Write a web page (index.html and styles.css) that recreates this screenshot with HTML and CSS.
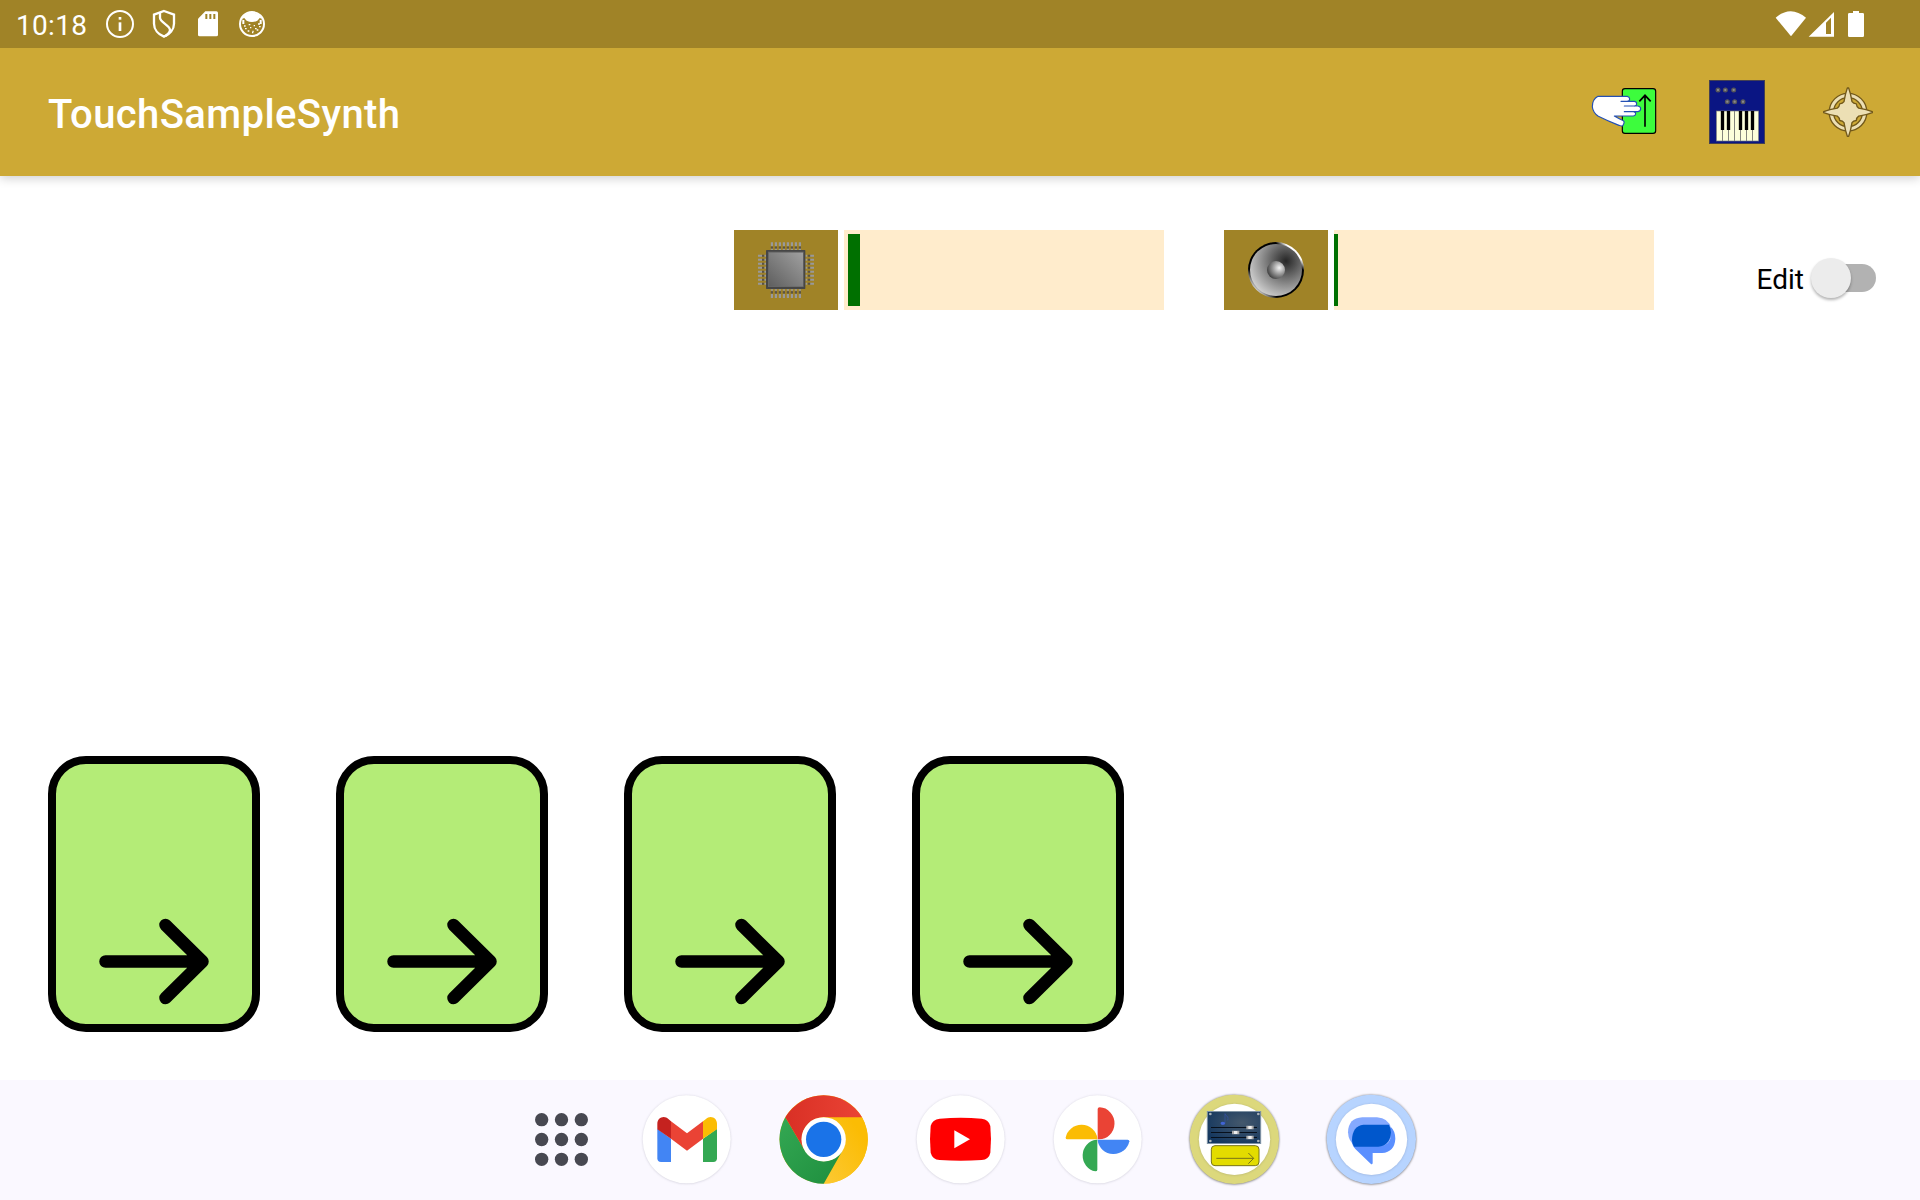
FILE: index.html
```html
<!DOCTYPE html>
<html lang="en">
<head>
<meta charset="utf-8">
<title>TouchSampleSynth</title>
<link rel="stylesheet" href="styles.css">
</head>
<body>
<div class="screen">
  <div class="status-bar">
    <span class="clock">10:18</span>
    <svg class="status-notes" viewBox="312 24 492 96" fill="none" stroke="#fff">
      <circle cx="360" cy="72" r="39" stroke-width="6"/>
      <path d="M360 67v26" stroke-width="8"/><path d="M360 51v8" stroke-width="8"/>
      <path d="M492 33l30 11v27c0 17-13 32-30 39c-17-7-30-22-30-39V44z" stroke-width="7"/>
      <path d="M480 38v15c0 14 30 23 30 37c0 7-7 13-13 18" stroke-width="7"/>
      <path d="M616 34h33q5 0 5 5v65q0 5-5 5h-50q-5 0-5-5V56z" fill="#fff" stroke="none"/>
      <path d="M619 42v15M631 42v15M643 42v15" stroke="#a08327" stroke-width="6"/>
      <circle cx="756" cy="72" r="36" stroke-width="6"/>
      <path d="M726 60Q728 40 756 37Q784 40 786 60L780 53L772 62Q756 70 740 62L732 53z" fill="#fff" stroke="none"/>
      <path d="M730 60v12M782 60v12" stroke-width="6"/>
      <path d="M732 78h5m9-4h5m10 3h4m9-5h6m-45 14h5m10-3h4m11 3h5m7-6h5m-39 13h5m9 1h4m9-4h5m-19 8h4" stroke-width="4"/>
    </svg>
    <svg class="status-system" viewBox="102 24 282 96" fill="#fff">
      <path d="M107 53Q152 14 198 53L153 109z"/>
      <path fill-rule="evenodd" d="M206 110L282 36v74zM258 68v34h15V53z"/>
      <path d="M339 33h18v6h11q4 0 4 4v64q0 4-4 4h-40q-4 0-4-4V43q0-4 4-4h11z"/>
    </svg>
  </div>

  <header class="app-bar">
    <h1 class="app-title">TouchSampleSynth</h1>
    <svg class="action action-touch" viewBox="60 60 210 192" stroke-linejoin="round" stroke-linecap="round">
      <rect x="157" y="86" width="100" height="134" rx="8" fill="#3dfc3d" stroke="#000" stroke-width="3.5"/>
      <path d="M225 200v-94M208 124l17-18l17 18" fill="none" stroke="#000" stroke-width="5" stroke-linecap="butt" stroke-linejoin="miter"/>
      <path d="M84 109h88q7 2 7 8q0 6-6 7h20q7 1 7 7q0 6-6 7h10q8 2 8 8q0 7-8 9h-12q6 2 5 7q-1 5-7 6h-57q15 9 27 14q5 3-1 14q-4 4-12 0q-32-12-62-27Q68 156 67 140Q67 118 84 109z" fill="#fff" stroke="#2450b5" stroke-width="3.5"/>
      <path d="M153 124h22M163 138h30M163 155h31" fill="none" stroke="#2450b5" stroke-width="3.5"/>
    </svg>
    <svg class="action action-synth" viewBox="414 60 174 192">
      <rect x="418.500" y="61.500" width="165" height="189" fill="#0a1583" stroke="#444052" stroke-width="3"/>
      <g fill="#8a8a8c" stroke="#55555a" stroke-width="4">
        <circle cx="444" cy="90" r="5.500"/><circle cx="466" cy="90" r="5.500"/><circle cx="491" cy="90" r="5.500"/>
        <circle cx="472" cy="125" r="5.500"/><circle cx="494" cy="125" r="5.500"/><circle cx="519" cy="125" r="5.500"/>
      </g>
      <rect x="439" y="153" width="127" height="90" fill="#fdffdb" stroke="#77787b" stroke-width="2"/>
      <path d="M457.500 153v90M475.500 153v90M493.500 153v90M511.500 153v90M529.500 153v90M547.500 153v90" stroke="#85867d" stroke-width="3"/>
      <path d="M457.500 153v57M475.500 153v57M511.500 153v57M529.500 153v57M547.500 153v57" stroke="#000" stroke-width="10"/>
    </svg>
    <svg class="action action-compass" viewBox="750 60 168 192" stroke-linejoin="round">
      <circle cx="834" cy="156.500" r="50" fill="none" stroke="#72591a" stroke-width="17"/>
      <circle cx="834" cy="156.500" r="50" fill="none" stroke="#ecdfb4" stroke-width="9"/>
      <path d="M832 84h4Q842 100 846 125Q850 131 859 131.500Q859.500 140 866 144.500Q890 148 907 155v3Q890 165 866 168.500Q859.500 173 859 181.500Q850 182 846 188Q842 213 836 229h-4Q826 213 822 188Q818 182 809 181.500Q808.500 173 802 168.500Q778 165 761 158v-3Q778 148 802 144.500Q808.500 140 809 131.500Q818 131 822 125Q826 100 832 84z" fill="#ecdfb4" stroke="#72591a" stroke-width="4"/>
    </svg>
  </header>

  <main class="content">
    <section class="toolbar">
      <div class="meter">
        <div class="meter-label">
          <svg class="meter-icon" viewBox="108 75 180 180">
            <defs><linearGradient id="die" x1="0" y1="1" x2="1" y2="0"><stop offset="0" stop-color="#5f5f5f"/><stop offset="1" stop-color="#a0a0a0"/></linearGradient></defs>
            <g fill="none" stroke="#999" stroke-dasharray="6.500 5.500">
              <path d="M152.500 87.500h92M152.500 243h92M120 119v92M276 119v92" stroke-width="12"/>
              <path d="M152.500 98h92M152.500 232h92M129.500 119v92M267 119v92" stroke="#57524a" stroke-width="7"/>
              <path d="M152.500 104h92M152.500 225h92M136 119v92M259 119v92" stroke-width="5"/>
            </g>
            <rect x="138" y="105" width="118" height="117" rx="2" fill="#464646"/>
            <rect x="144" y="110" width="107" height="106" fill="#686868"/>
            <rect x="147" y="113" width="102" height="101" fill="url(#die)"/>
          </svg>
        </div>
        <div class="meter-track"><div class="meter-fill cpu-fill"></div></div>
      </div>
      <div class="meter">
        <div class="meter-label">
          <svg class="meter-icon" viewBox="108 75 180 180">
            <defs>
              <linearGradient id="rim" x1="0" y1="1" x2="1" y2="0"><stop offset="0.120" stop-color="#fff"/><stop offset="0.270" stop-color="#000"/><stop offset="0.740" stop-color="#000"/><stop offset="0.820" stop-color="#fff"/></linearGradient>
              <radialGradient id="cone" gradientUnits="userSpaceOnUse" cx="228" cy="138" r="118"><stop offset="0" stop-color="#262626"/><stop offset="0.500" stop-color="#7b7b7b"/><stop offset="1" stop-color="#cfcfcf"/></radialGradient>
              <radialGradient id="cap" cx="0.680" cy="0.380" r="0.720"><stop offset="0" stop-color="#f5f5f5"/><stop offset="0.500" stop-color="#969696"/><stop offset="1" stop-color="#3c3c3c"/></radialGradient>
            </defs>
            <circle cx="198" cy="165" r="84" fill="url(#rim)"/>
            <circle cx="198" cy="165" r="78" fill="url(#cone)"/>
            <circle cx="198" cy="165" r="27" fill="url(#cap)"/>
          </svg>
        </div>
        <div class="meter-track"><div class="meter-fill volume-fill"></div></div>
      </div>
      <label class="edit-toggle"><span class="edit-label">Edit</span><span class="switch"><span class="switch-thumb"></span></span></label>
    </section>

    <section class="pads">
      <div class="pad"><svg class="pad-arrow" viewBox="0 0 116 88"><path d="M10.500 44.500h97M70.500 8l37 36.500l-37 36.500"/></svg></div>
      <div class="pad"><svg class="pad-arrow" viewBox="0 0 116 88"><path d="M10.500 44.500h97M70.500 8l37 36.500l-37 36.500"/></svg></div>
      <div class="pad"><svg class="pad-arrow" viewBox="0 0 116 88"><path d="M10.500 44.500h97M70.500 8l37 36.500l-37 36.500"/></svg></div>
      <div class="pad"><svg class="pad-arrow" viewBox="0 0 116 88"><path d="M10.500 44.500h97M70.500 8l37 36.500l-37 36.500"/></svg></div>
    </section>
  </main>

  <nav class="dock">
    <svg class="dock-grid" viewBox="42 66 168 288" fill="#474851">
      <circle cx="65" cy="149" r="20"/><circle cx="124.500" cy="149" r="20"/><circle cx="184" cy="149" r="20"/>
      <circle cx="65" cy="208.500" r="20"/><circle cx="124.500" cy="208.500" r="20"/><circle cx="184" cy="208.500" r="20"/>
      <circle cx="65" cy="268" r="20"/><circle cx="124.500" cy="268" r="20"/><circle cx="184" cy="268" r="20"/>
    </svg>
    <svg class="dock-app" viewBox="357 66 288 288">
      <circle class="disc" cx="500" cy="208" r="132"/>
      <path d="M412 176l41 30v70h-30q-11 0-11-11z" fill="#4285f4"/>
      <path d="M591 176l-42 30v70h31q11 0 11-11z" fill="#34a853"/>
      <path d="M453 154l48 36l48-36v52l-48 36l-48-36z" fill="#ea4335"/>
      <path d="M412 178v-17c0-17 20-27 34-13l7 6v52z" fill="#c5221f"/>
      <path d="M591 178v-17c0-17-20-27-34-13l-8 6v52z" fill="#fbbc04"/>
    </svg>
    <svg class="dock-app" viewBox="768 66 288 288">
      <defs>
        <linearGradient id="cr" x1="0" x2="1"><stop stop-color="#d93025"/><stop offset="1" stop-color="#ea4335"/></linearGradient>
        <linearGradient id="cg" x1="0" y1="0" x2="1" y2="1"><stop stop-color="#34a853"/><stop offset="1" stop-color="#1e8e3e"/></linearGradient>
        <linearGradient id="cy" x1="0" y1="1" x2="1" y2="0"><stop stop-color="#fcc934"/><stop offset="0.800" stop-color="#fbbc04"/></linearGradient>
      </defs>
      <circle cx="911" cy="208" r="132.500" fill="#fbbc04"/>
      <path d="M911 142h115A133 133 0 0 1 911 341L968 241A66 66 0 0 0 911 142z" fill="url(#cy)"/>
      <path d="M796 142L854 241A66 66 0 0 0 968 241L911 341A133 133 0 0 1 796 142z" fill="url(#cg)"/>
      <path d="M796 142A133 133 0 0 1 1026 142H911A66 66 0 0 0 854 241z" fill="url(#cr)"/>
      <circle cx="911" cy="208" r="66.500" fill="#fff"/><circle cx="911" cy="208" r="53" fill="#1a73e8"/>
    </svg>
    <svg class="dock-app" viewBox="39 66 288 288">
      <circle class="disc" cx="182" cy="208" r="132"/>
      <path d="M119 146Q182 141 245 146Q266 148 271 168Q275 208 271 248Q267 268 245 270Q182 275 119 270Q97 268 92 248Q88 208 92 168Q97 148 119 146z" fill="#f00"/>
      <path d="M163 181l47 27l-47 27z" fill="#fff"/>
    </svg>
    <svg class="dock-app" viewBox="450 66 288 288">
      <circle class="disc" cx="593" cy="208" r="132"/>
      <path d="M593 208v-91q0-5 6-5a46 48 0 0 1-3 96z" fill="#ea4335"/>
      <path d="M593 209h90q5 0 5 5a48 46 0 0 1-95-3z" fill="#4285f4"/>
      <path d="M592 209v90q0 5-6 5a46 48 0 0 1 3-95z" fill="#34a853"/>
      <path d="M592 208h-90q-5 0-5-5a48 46 0 0 1 95 2z" fill="#fbbc04"/>
    </svg>
    <svg class="dock-app" viewBox="51 66 288 288">
      <defs><radialGradient id="panel" cx="0.650" cy="0.350" r="0.750"><stop stop-color="#44586c"/><stop offset="1" stop-color="#14375f"/></radialGradient></defs>
      <circle class="ring" cx="193" cy="208" r="134" fill="#dcd87c"/>
      <circle class="disc" cx="193.500" cy="208" r="107"/>
      <rect x="112" y="124.500" width="160" height="96" fill="url(#panel)" stroke="#7f93a4" stroke-width="3"/>
      <g fill="#a9b2b8"><circle cx="121" cy="132" r="4"/><circle cx="265" cy="132" r="4"/><circle cx="121" cy="213" r="4"/><circle cx="265" cy="213" r="4"/></g>
      <path d="M123 172.500h138M123 187.500h138M123 202.500h138" stroke="#07101c" stroke-width="3"/>
      <path d="M229 172.500h22M186 187.500h22M229 202.500h22" stroke="#aaa" stroke-width="10"/>
      <path d="M235 172.500h10M192 187.500h10M235 202.500h10" stroke="#eee" stroke-width="9"/>
      <path d="M165 160v-29q2 7 8 9q2 6 0 11" fill="none" stroke="#3552a8" stroke-width="2"/><ellipse cx="158.500" cy="160" rx="7" ry="5" fill="#4164d4"/>
      <rect x="124" y="227" width="143" height="60" rx="11" fill="#e3dc00" stroke="#77741a" stroke-width="3"/>
      <path d="M139 265h112M235 249l16 16l-16 16" fill="none" stroke="#77741a" stroke-width="3"/>
    </svg>
    <svg class="dock-app" viewBox="462 66 288 288">
      <circle class="ring" cx="604" cy="208" r="134" fill="#b7d4ff"/>
      <circle class="disc" cx="604.500" cy="208" r="107"/>
      <path d="M577 142h44q34 2 42 32v28q-8 26-36 28h-70q-22-16-23-43q1-43 43-45z" fill="#85a9ff"/>
      <path d="M662 170q14 13 14 36q-2 40-40 43h-28v30q-1 6-6 2l-46-44q-11-12-11-27l27 18h60q28-4 31-30z" fill="#5a8fff"/>
      <path d="M580 164h77q6 12 6 24q-3 38-38 42h-73q-6-10-6-20q1-42 34-46z" fill="#0057cc"/>
    </svg>
  </nav>
</div>
</body>
</html>
```
FILE: styles.css
```css
* { box-sizing: border-box; }
body { margin: 0; font-family: Roboto, "Liberation Sans", sans-serif; background: #fff; }
svg { display: block; flex: none; }

.screen { width: 1920px; height: 1200px; display: flex; flex-direction: column; overflow: hidden; }

.status-bar { height: 48px; flex: none; display: flex; align-items: center; padding: 0 52px 0 16px; background: #a08327; color: #fff; }
.clock { width: 88px; font-size: 28px; line-height: 32px; letter-spacing: 0.3px; padding-top: 3px; }
.status-notes { width: 164px; height: 32px; }
.status-system { width: 94px; height: 32px; margin-left: auto; }

.app-bar { height: 128px; flex: none; display: flex; align-items: flex-start; padding: 20px 44px 0 48px; background: #cda935; box-shadow: 0 2px 10px rgba(0, 0, 0, 0.2); clip-path: inset(0 0 -16px 0); }
.app-title { margin: 23px auto 0 0; font-size: 40px; line-height: 48px; font-weight: 500; letter-spacing: 0.4px; color: #fff; }
.action { height: 64px; margin-top: 12px; }
.action-touch { width: 70px; margin-right: 48px; }
.action-synth { width: 58px; margin-right: 54px; }
.action-compass { width: 56px; }

.content { flex: 1; display: flex; flex-direction: column; justify-content: space-between; padding: 54px 44px 48px 48px; }
.toolbar { display: flex; justify-content: flex-end; gap: 60px; }
.meter { display: flex; gap: 6px; }
.meter-label { width: 104px; height: 80px; display: flex; align-items: center; justify-content: center; background: #a08327; }
.meter-icon { width: 60px; height: 60px; }
.meter-track { width: 320px; height: 80px; padding: 4px 0; background: #ffeccc; }
.meter-fill { height: 72px; background: #007000; }
.cpu-fill { width: 12.4px; margin-left: 4px; }
.volume-fill { width: 4px; }

.edit-toggle { width: 162px; display: flex; align-items: center; justify-content: flex-end; gap: 7px; margin: 16px 0 0; height: 64px; }
.edit-label { font-size: 28px; line-height: 32px; padding-top: 3px; color: #000; }
.switch { width: 65px; height: 28px; border-radius: 14px; background: linear-gradient(90deg, transparent 20px, #b2b2b2 20px); display: flex; align-items: center; }
.switch-thumb { width: 40px; height: 40px; border-radius: 50%; background: #ececec; box-shadow: 0 2px 3px rgba(0, 0, 0, 0.3); }

.pads { display: flex; gap: 76px; }
.pad { width: 212px; height: 276px; display: flex; align-items: flex-end; padding: 0 0 19px 39px; border: 8px solid #000; border-radius: 38px; background: #b4ec77; }
.pad-arrow { width: 116px; height: 88px; fill: none; stroke: #000; stroke-width: 12.5; stroke-linecap: round; stroke-linejoin: round; }

.dock { height: 120px; flex: none; display: flex; align-items: center; gap: 41px; padding-left: 534px; background: #faf8ff; }
.dock-grid { width: 56px; height: 96px; margin-right: 8px; }
.dock-app { width: 96px; height: 96px; overflow: visible; }
.disc { fill: #fff; filter: drop-shadow(0 1px 3px rgba(60, 60, 80, 0.22)); }
.ring { filter: drop-shadow(0 1px 3px rgba(0, 0, 0, 0.6)); }
```
